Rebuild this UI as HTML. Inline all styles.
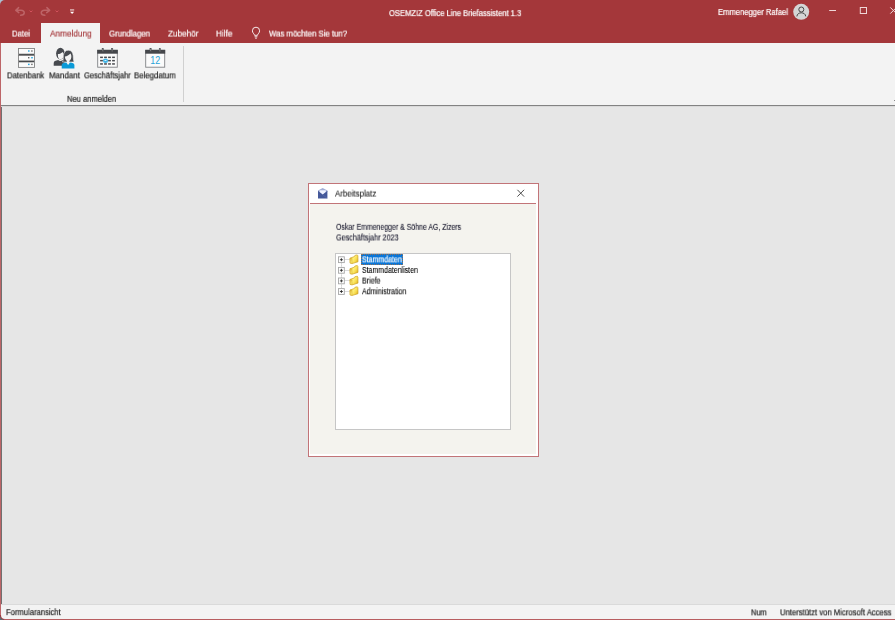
<!DOCTYPE html>
<html lang="de">
<head>
<meta charset="utf-8">
<title>OSEMZIZ Office Line Briefassistent 1.3</title>
<style>
*{box-sizing:border-box;margin:0;padding:0}
html,body{width:895px;height:620px;overflow:hidden;background:#5f6a72}
body{position:relative;font-family:"Liberation Sans",sans-serif;color:#262626}
.abs{position:absolute}
#cornerTL{position:absolute;left:0;top:0;width:6px;height:6px;background:#a9c1d2}
#win{position:absolute;left:0;top:0;width:905px;height:620px;background:#a4373a;border-radius:5px 0 0 5px;overflow:hidden}
.t{position:absolute;white-space:nowrap;transform-origin:0 50%;line-height:1;will-change:transform}
#tabA{position:absolute;left:41px;top:23px;width:58.6px;height:21px;background:#f3f3f3}
#ribbon{position:absolute;left:1px;top:43px;width:904px;height:62px;background:#f3f3f3}
#ribline{position:absolute;left:1px;top:105px;width:904px;height:1px;background:#828282}
#ribline2{position:absolute;left:1px;top:106px;width:904px;height:1px;background:#d9d9d9}
#content{position:absolute;left:1px;top:107px;width:904px;height:497px;background:#e6e6e6;border-left:1px solid #707070}
#statline{position:absolute;left:1px;top:604px;width:904px;height:1px;background:#dadada}
#status{position:absolute;left:1px;top:605px;width:904px;height:14px;background:#f3f3f3;border-bottom-left-radius:4px}
#dlg{position:absolute;left:308px;top:183px;width:231px;height:274px;background:#fff;border:1px solid #c27478}
#dlgline{position:absolute;left:1px;top:19px;width:226px;height:1px;background:#c27478}
#dlgbody{position:absolute;left:1px;top:20px;width:226px;height:250px;background:#f4f3ee}
#tree{position:absolute;left:335px;top:253px;width:176px;height:177px;background:#fff;border:1px solid #c6c6c6}
#sel{position:absolute;left:361px;top:254px;width:42px;height:11px;background:#0a76d8;border:1px dotted #93735a}
svg{position:absolute;left:0;top:0;overflow:visible}
</style>
</head>
<body>
<div id="cornerTL"></div>
<div id="win">
<div id="tabA"></div>
<div id="ribbon"></div>
<div id="ribline"></div>
<div id="ribline2"></div>
<div id="content"></div>
<div id="statline"></div>
<div class="abs" style="left:0;top:43px;width:1px;height:572px;background:#bd6568"></div>
<div class="abs" style="left:4px;top:619px;width:901px;height:1px;background:#b85d60"></div>
<div id="status"></div>
<div class="abs" style="left:183px;top:46px;width:1px;height:56px;background:#d0d0d0"></div>
<div id="dlg"><div id="dlgline"></div><div id="dlgbody"></div></div>
<div id="tree"></div>
<div id="sel"></div>

<svg id="icons" width="895" height="620" viewBox="0 0 895 620">
<!-- quick access toolbar -->
<g fill="none" stroke="#bd6467" stroke-width="1.5" stroke-linecap="round" stroke-linejoin="round">
  <path d="M18.6 7.6 L15.8 10.3 L18.8 12.6 M16 10.3 H21 C25.4 10.3 25.4 15.2 20.6 15.2"/>
  <path d="M46.9 7.6 L49.7 10.3 L46.7 12.6 M49.5 10.3 H44.5 C40.1 10.3 40.1 15.2 44.9 15.2"/>
</g>
<g fill="none" stroke="#d2525c" stroke-width="1">
  <path d="M29.6 10.6 L31 12 L32.4 10.6"/>
  <path d="M55.6 10.6 L57 12 L58.4 10.6"/>
</g>
<g fill="#fff">
  <rect x="70" y="9.5" width="4.2" height="0.9"/>
  <path d="M70 11.7 H74.2 L72.1 14.1 Z"/>
</g>
<!-- lightbulb -->
<g fill="none" stroke="#fff" stroke-width="1" stroke-linejoin="round">
  <path d="M254.5 35.3 C254.3 33.7 252.4 33 252.4 30.8 A3.6 3.6 0 0 1 259.6 30.8 C259.6 33 257.7 33.7 257.5 35.3 Z" stroke-width="0.9"/>
  <path d="M254.6 36.8 H257.4 M255.2 38.2 H256.8" stroke-width="0.9"/>
</g>
<!-- user avatar -->
<circle cx="801.2" cy="11.8" r="8" fill="#d5d5d5"/>
<g fill="none" stroke="#454545" stroke-width="1">
  <circle cx="801.3" cy="9.5" r="2.5"/>
  <path d="M796.9 16.4 C797 11.6 805.6 11.6 805.7 16.4"/>
</g>
<!-- window buttons -->
<g fill="none" stroke="#f0d6d7" stroke-width="1">
  <path d="M829.2 10.5 H836"/>
  <rect x="860.3" y="7.5" width="6.2" height="6"/>
  <path d="M890.3 7.4 L896.5 13.6 M896.5 7.4 L890.3 13.6"/>
</g>
<rect x="894" y="100" width="1" height="1" fill="#8a8a8a"/>

<!-- Datenbank icon -->
<g>
  <rect x="18.5" y="48.5" width="16" height="5.6" fill="#fbfbfb" stroke="#838383" stroke-width="0.9"/>
  <rect x="18.5" y="55.3" width="16" height="5.6" fill="#fbfbfb" stroke="#838383" stroke-width="0.9"/>
  <rect x="18.5" y="62" width="16" height="5.4" fill="#fbfbfb" stroke="#838383" stroke-width="0.9"/>
  <rect x="18.6" y="54.1" width="15.8" height="1.2" fill="#45474a"/>
  <rect x="18.6" y="60.9" width="15.8" height="1.1" fill="#45474a"/>
  <rect x="28" y="50.3" width="1.6" height="1.4" fill="#2ba6de"/><rect x="31.2" y="50.3" width="1.4" height="1.4" fill="#666"/>
  <rect x="28" y="57" width="1.4" height="1.4" fill="#666"/><rect x="31.2" y="57" width="1.6" height="1.4" fill="#2ba6de"/>
  <rect x="28" y="63.7" width="1.6" height="1.4" fill="#2ba6de"/><rect x="31.2" y="63.7" width="1.4" height="1.4" fill="#666"/>
</g>

<!-- Mandant icon -->
<g>
  <!-- man -->
  <ellipse cx="60.4" cy="53.6" rx="4.3" ry="5.8" fill="#474a4f"/>
  <path d="M57.9 54 C59.6 53.9 61.6 53.2 62.6 51.9 C63.6 53 63.9 54.6 63.6 56.2 C63.2 58 61.8 59.3 60.4 59.3 C58.8 59.3 57.6 57.6 57.9 54 Z" fill="#f3f3f3"/>
  <path d="M53.7 65.7 V63.2 C53.7 61.2 55.6 60.6 58.2 60.1 C59.6 61.4 61.2 61.4 62.6 60.1 L64.5 60.6 V65.7 Z" fill="#474a4f"/>
  <!-- woman hair -->
  <path d="M62.5 62 C63.4 60 63.2 57.5 63.4 55.6 C63.8 52 65.7 50.2 68.3 50.2 C71 50.2 72.8 52 73.2 55.6 C73.4 57.5 73.2 60 74.1 62 Z" fill="#474a4f" stroke="#f3f3f3" stroke-width="0.6"/>
  <path d="M64.9 56.6 C66.9 56.2 69.2 55 70.4 53.4 C71.3 54.6 71.5 56 71.3 57.6 C71 59.8 69.6 61.4 68.1 61.4 C66.5 61.4 65 59.6 64.9 56.6 Z" fill="#f3f3f3"/>
  <rect x="66.9" y="60.8" width="2.4" height="2.2" fill="#f3f3f3"/>
  <path d="M61.7 68.4 V65 C61.7 63.4 63.6 62.9 66.3 62.5 L68.1 64.9 L69.9 62.5 C72.6 62.9 74.4 63.4 74.4 65 V68.4 Z" fill="#0a9ad7"/>
</g>

<!-- Geschäftsjahr calendar -->
<g>
  <rect x="97.7" y="50.2" width="19.6" height="17" fill="#fbfbfb" stroke="#808285" stroke-width="0.9"/>
  <rect x="97.2" y="49.9" width="20.6" height="3.8" fill="#45474b"/>
  <rect x="102.1" y="48.3" width="1.3" height="3.6" fill="#8b8d90" stroke="#45474b" stroke-width="0.5"/>
  <rect x="111.5" y="48.3" width="1.3" height="3.6" fill="#8b8d90" stroke="#45474b" stroke-width="0.5"/>
  <g fill="#4a4c50">
    <rect x="100.1" y="56.6" width="2.8" height="1.5"/><rect x="104.1" y="56.6" width="2.8" height="1.5"/><rect x="108.1" y="56.6" width="2.8" height="1.5"/><rect x="112.1" y="56.6" width="2.8" height="1.5"/>
    <rect x="100.1" y="59.9" width="2.8" height="1.5"/><rect x="108.1" y="59.9" width="2.8" height="1.5"/><rect x="112.1" y="59.9" width="2.8" height="1.5"/>
    <rect x="100.1" y="63.2" width="2.8" height="1.5"/><rect x="104.1" y="63.2" width="2.8" height="1.5"/><rect x="108.1" y="63.2" width="2.8" height="1.5"/><rect x="112.1" y="63.2" width="2.8" height="1.5"/>
  </g>
  <ellipse cx="105.5" cy="60.7" rx="2.6" ry="2.2" fill="#3fb4e6"/>
  <rect x="104.5" y="60.1" width="2" height="0.9" fill="#e8f6fc"/>
</g>

<!-- Belegdatum calendar -->
<g>
  <rect x="145.7" y="50.2" width="19" height="17" fill="#fbfbfb" stroke="#808285" stroke-width="0.9"/>
  <rect x="145.2" y="49.9" width="20" height="3.8" fill="#45474b"/>
  <rect x="149.9" y="48.3" width="1.3" height="3.6" fill="#8b8d90" stroke="#45474b" stroke-width="0.5"/>
  <rect x="159.2" y="48.3" width="1.3" height="3.6" fill="#8b8d90" stroke="#45474b" stroke-width="0.5"/>
  <text x="155.2" y="63.8" font-family="Liberation Sans, sans-serif" font-size="10.2" fill="#2aa3d8" text-anchor="middle" textLength="10" lengthAdjust="spacingAndGlyphs">12</text>
</g>

<!-- dialog icon (envelope) -->
<g>
  <path d="M318 190.6 L322.7 188 L327.4 190.6 V192 H318 Z" fill="#a3aed6"/>
  <rect x="319.6" y="190.3" width="6.2" height="4.2" fill="#f0f3ff"/>
  <path d="M318 190.8 L322.7 194.6 L327.4 190.8 V198.4 H318 Z" fill="#44589a"/>
  <path d="M322.7 194.8 L327.2 198.2" stroke="#6576b0" stroke-width="0.5"/>
</g>
<!-- dialog close -->
<path d="M517.4 189.8 L524.1 196.6 M524.1 189.8 L517.4 196.6" stroke="#3a3a3a" stroke-width="0.9" fill="none"/>

<!-- tree lines -->
<g stroke="#b8b8b8" stroke-width="1" stroke-dasharray="1 1">
  <path d="M341.5 262.6 V288.6"/>
  <path d="M344.5 259.5 H349.5 M344.5 270.5 H349.5 M344.5 280.5 H349.5 M344.5 291.5 H349.5"/>
</g>
<!-- plus boxes + folders -->
<defs>
  <linearGradient id="fg" x1="0" y1="0.2" x2="1" y2="0.8">
    <stop offset="0" stop-color="#e2b426"/><stop offset="0.4" stop-color="#fff17c"/><stop offset="0.7" stop-color="#f7dc4e"/><stop offset="1" stop-color="#dcae22"/>
  </linearGradient>
  <g id="pm">
    <rect x="338.5" y="-2.9" width="5.8" height="5.8" fill="#fff" stroke="#a6a6a6" stroke-width="0.9"/>
    <path d="M339.9 0 H342.9 M341.4 -1.5 V1.5" stroke="#1a1a1a" stroke-width="0.8"/>
  </g>
  <g id="fold">
    <path d="M349.9 -1.2 L354.5 -2.9 L354.9 -4 L357.3 -4.5 L357.9 -3.6 L358 2.4 L352 4.2 L350 3.7 Z" fill="url(#fg)" stroke="#cfa426" stroke-width="0.7" stroke-linejoin="round"/>
    <path d="M350 -1.1 L351.9 -0.7 L352 4.1" fill="none" stroke="#d2a92a" stroke-width="0.6"/>
  </g>
</defs>
<use href="#pm" y="259.7"/><use href="#pm" y="270.3"/><use href="#pm" y="280.9"/><use href="#pm" y="291.5"/>
<use href="#fold" y="259.4"/><use href="#fold" y="270"/><use href="#fold" y="280.7"/><use href="#fold" y="291.3"/>

</svg>

<span class="t" id="ttl" style="left:388.8px;top:9.00px;font-size:8.5px;color:#fff;transform:translateY(0.12px) scaleX(0.8928) rotate(0.03deg);-webkit-text-stroke:0.2px #fff;">OSEMZIZ Office Line Briefassistent 1.3</span>
<span class="t" id="usr" style="left:717.8px;top:8.00px;font-size:8.8px;color:#fff;transform:translateY(0.06px) scaleX(0.8675) rotate(0.03deg);-webkit-text-stroke:0.2px #fff;">Emmenegger Rafael</span>
<span class="t" id="tb1" style="left:11.7px;top:29.00px;font-size:9px;color:#fff;transform:translateY(0.59px) scaleX(0.8611) rotate(0.03deg);-webkit-text-stroke:0.2px #fff;">Datei</span>
<span class="t" id="tb2" style="left:49.5px;top:29.00px;font-size:9px;color:#a4373a;transform:translateY(0.58px) scaleX(0.9154) rotate(0.03deg);-webkit-text-stroke:0.2px #a4373a;">Anmeldung</span>
<span class="t" id="tb3" style="left:109.1px;top:29.00px;font-size:9px;color:#fff;transform:translateY(0.58px) scaleX(0.8735) rotate(0.03deg);-webkit-text-stroke:0.2px #fff;">Grundlagen</span>
<span class="t" id="tb4" style="left:167.8px;top:29.00px;font-size:9px;color:#fff;transform:translateY(0.58px) scaleX(0.9095) rotate(0.03deg);-webkit-text-stroke:0.2px #fff;">Zubehör</span>
<span class="t" id="tb5" style="left:215.9px;top:29.00px;font-size:9px;color:#fff;transform:translateY(0.59px) scaleX(0.9101) rotate(0.03deg);-webkit-text-stroke:0.2px #fff;">Hilfe</span>
<span class="t" id="tb6" style="left:268.7px;top:29.00px;font-size:8.5px;color:#fff;transform:translateY(0.56px) scaleX(0.9166) rotate(0.03deg);-webkit-text-stroke:0.2px #fff;">Was möchten Sie tun?</span>
<span class="t" id="rl1" style="left:7.4px;top:71.00px;font-size:8.5px;color:#222;transform:translateY(0.38px) scaleX(0.9069) rotate(0.03deg);-webkit-text-stroke:0.2px #222;">Datenbank</span>
<span class="t" id="rl2" style="left:48.7px;top:71.00px;font-size:8.5px;color:#222;transform:translateY(0.38px) scaleX(0.9336) rotate(0.03deg);-webkit-text-stroke:0.2px #222;">Mandant</span>
<span class="t" id="rl3" style="left:83.7px;top:71.00px;font-size:8.5px;color:#222;transform:translateY(0.37px) scaleX(0.8921) rotate(0.03deg);-webkit-text-stroke:0.2px #222;">Geschäftsjahr</span>
<span class="t" id="rl4" style="left:134.2px;top:71.00px;font-size:8.5px;color:#222;transform:translateY(0.38px) scaleX(0.9211) rotate(0.03deg);-webkit-text-stroke:0.2px #222;">Belegdatum</span>
<span class="t" id="rl5" style="left:67.3px;top:94.00px;font-size:8.5px;color:#222;transform:translateY(0.87px) scaleX(0.8915) rotate(0.03deg);-webkit-text-stroke:0.2px #222;">Neu anmelden</span>
<span class="t" id="st1" style="left:6.2px;top:608.00px;font-size:8.5px;color:#222;transform:translateY(0.17px) scaleX(0.8992) rotate(0.03deg);-webkit-text-stroke:0.2px #222;">Formularansicht</span>
<span class="t" id="st2" style="left:751.1px;top:608.00px;font-size:8.5px;color:#222;transform:translateY(0.39px) scaleX(0.8743) rotate(0.03deg);-webkit-text-stroke:0.2px #222;">Num</span>
<span class="t" id="st3" style="left:779.7px;top:608.00px;font-size:8.5px;color:#222;transform:translateY(0.34px) scaleX(0.9043) rotate(0.03deg);-webkit-text-stroke:0.2px #222;">Unterstützt von Microsoft Access</span>
<span class="t" id="dt" style="left:334.7px;top:189.00px;font-size:8.5px;color:#222;transform:translateY(0.58px) scaleX(0.9296) rotate(0.03deg);-webkit-text-stroke:0.1px #222;">Arbeitsplatz</span>
<span class="t" id="d1" style="left:336.1px;top:222.00px;font-size:8.4px;color:#15152a;transform:translateY(0.82px) scaleX(0.8301) rotate(0.03deg);-webkit-text-stroke:0.1px #15152a;">Oskar Emmenegger &amp; Söhne AG, Zizers</span>
<span class="t" id="d2" style="left:336.1px;top:233.00px;font-size:8.4px;color:#15152a;transform:translateY(0.46px) scaleX(0.8617) rotate(0.03deg);-webkit-text-stroke:0.1px #15152a;">Geschäftsjahr 2023</span>
<span class="t" id="n1" style="left:361.9px;top:255.00px;font-size:8.3px;color:#fff;transform:translateY(0.38px) scaleX(0.8459) rotate(0.03deg);-webkit-text-stroke:0.2px #fff;">Stammdaten</span>
<span class="t" id="n2" style="left:361.9px;top:265.00px;font-size:8.3px;color:#000;transform:translateY(0.97px) scaleX(0.8430) rotate(0.03deg);-webkit-text-stroke:0.1px #000;">Stammdatenlisten</span>
<span class="t" id="n3" style="left:361.9px;top:276.00px;font-size:8.3px;color:#000;transform:translateY(0.59px) scaleX(0.8575) rotate(0.03deg);-webkit-text-stroke:0.1px #000;">Briefe</span>
<span class="t" id="n4" style="left:361.9px;top:287.00px;font-size:8.3px;color:#000;transform:translateY(0.27px) scaleX(0.8425) rotate(0.03deg);-webkit-text-stroke:0.1px #000;">Administration</span>
</div>
</body>
</html>
